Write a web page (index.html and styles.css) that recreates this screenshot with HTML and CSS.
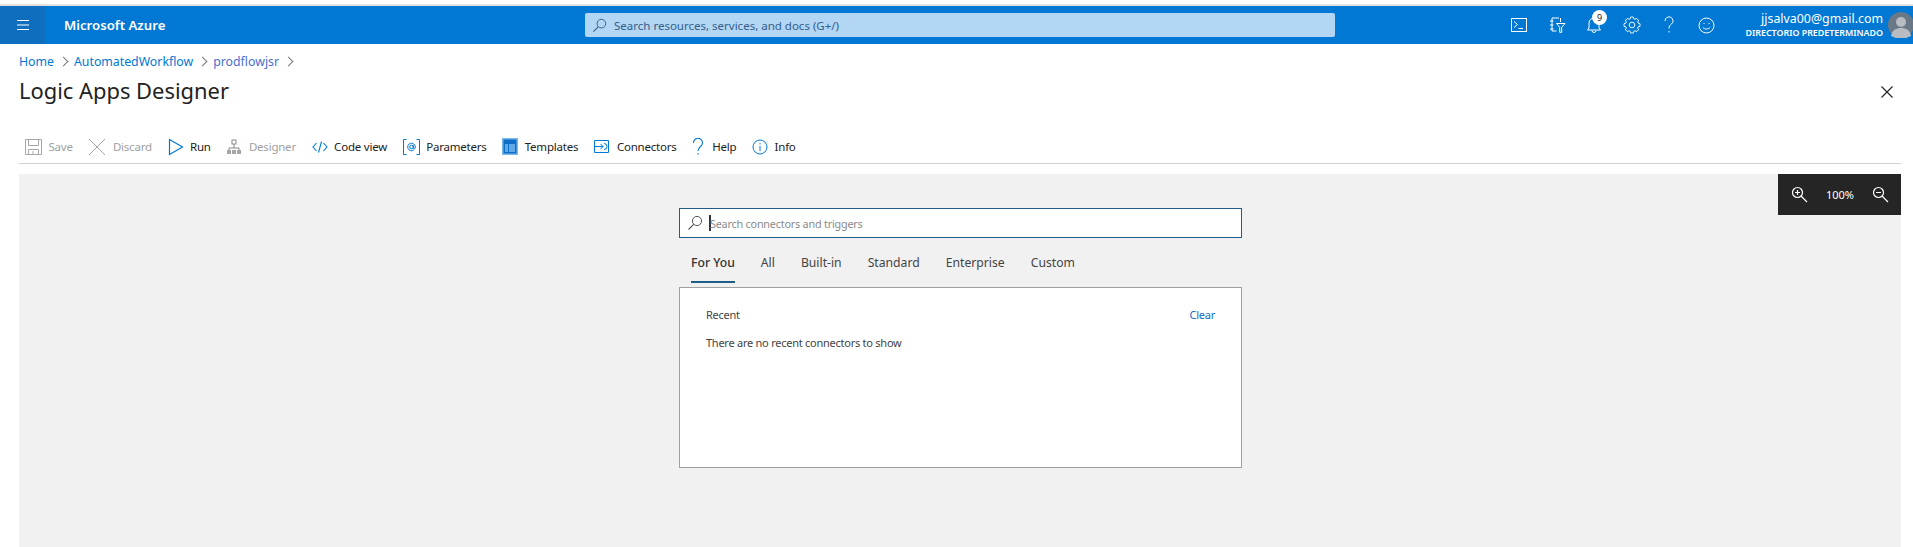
FILE: index.html
```html
<!DOCTYPE html>
<html lang="en">
<head>
  <meta charset="UTF-8">
  <title>Logic Apps Designer</title>
  <link rel="stylesheet" href="styles.css">
</head>
<body>
  <div class="franja"></div>
  <header class="barra">
    <div class="marca">
      <button class="menu">
        <svg width="16" height="16" viewBox="0 0 16 16"><path d="M2 3.500h12M2 8h12M2 12.500h12" stroke="#fff" stroke-width="1.100" fill="none"/></svg>
      </button>
      <span class="nombre">Microsoft Azure</span>
    </div>
    <div class="buscador">
      <svg width="15" height="15" viewBox="0 0 16 16"><circle cx="10" cy="6" r="4.600" fill="none" stroke="#2f5f8a" stroke-width="1"/><path d="M6.600 9.400 1.500 14.500" stroke="#2f5f8a" stroke-width="1.100"/></svg>
      <span>Search resources, services, and docs (G+/)</span>
    </div>
    <div class="acciones">
      <div class="iconos">
        <svg width="16" height="14" viewBox="0 0 16 14" fill="none" stroke="#fff"><rect x=".5" y=".5" width="15" height="13"/><path d="M3 3.500l3.500 3L3 9.500M7.500 10.500h4.500"/></svg>
        <svg width="18" height="18" viewBox="0 0 18 18" fill="none" stroke="#fff"><path d="M11 2H4v13h4.500M2 5h3.500M2 9h3.500M2 13h3.500M12.500 2v4"/><path d="M8.500 7.500h8.500l-3.300 3.800v5h-2v-5z"/></svg>
        <div class="campana">
          <svg width="16" height="18" viewBox="0 0 16 18" fill="none" stroke="#fff"><path d="M3 12V7a5 5 0 0 1 10 0v5l1.500 2h-13zM6 14.500a2 2 0 0 0 4 0"/></svg>
          <span class="globo">9</span>
        </div>
        <svg width="18" height="18" viewBox="-9 -9 18 18" fill="none" stroke="#fff" stroke-width=".9">
          <circle r="2.800"/>
          <path id="diente" d="M-2-6-1.300-8H1.300L2-6A6.320 6.320 0 0 1 2.830-5.650"/>
          <use href="#diente" transform="rotate(45)"/>
          <use href="#diente" transform="rotate(90)"/>
          <use href="#diente" transform="rotate(135)"/>
          <use href="#diente" transform="rotate(180)"/>
          <use href="#diente" transform="rotate(225)"/>
          <use href="#diente" transform="rotate(270)"/>
          <use href="#diente" transform="rotate(315)"/>
        </svg>
        <svg width="16" height="18" viewBox="0 0 16 18" fill="none" stroke="#fff"><path d="M4 5a4 4 0 1 1 6.500 3C9 9.200 8 10 8 12.500"/><path d="M8 15v1.500"/></svg>
        <svg width="17" height="17" viewBox="0 0 17 17" fill="none" stroke="#fff"><circle cx="8.500" cy="8.500" r="7.500"/><path d="M5 10.500c1.800 2 5.200 2 7 0M6 6v1M11 6v1"/></svg>
      </div>
      <div class="usuario">
        <div class="correo">jjsalva00@gmail.com</div>
        <div class="directorio">DIRECTORIO PREDETERMINADO</div>
      </div>
      <div class="avatar">
        <svg width="26" height="26" viewBox="0 0 26 26"><circle cx="13" cy="13" r="13" fill="#6b7886"/><circle cx="13" cy="10" r="5" fill="#b9bdc2"/><path d="M3 24c1-6 5-8 10-8s9 2 10 8l-5 2H8z" fill="#b9bdc2"/></svg>
      </div>
    </div>
  </header>

  <main class="pagina">
    <nav class="migas">
      <a>Home</a><i class="sep"></i><a>AutomatedWorkflow</a><i class="sep"></i><a>prodflowjsr</a><i class="sep"></i>
    </nav>
    <div class="titulo">
      <h1>Logic Apps Designer</h1>
      <svg class="cerrar" width="14" height="14" viewBox="0 0 14 14"><path d="M1.500 1.500l11 11M12.500 1.500l-11 11" stroke="#222" stroke-width="1.100"/></svg>
    </div>

    <div class="herramientas">
      <div class="boton apagado">
        <svg width="17" height="18" viewBox="0 0 17 18" fill="none" stroke="#a6a6a6"><path d="M.5 1.500h16v15H.5zM3.500 1.500v6h10v-6M3.500 16.500v-5h10v5M8 13v3.500"/></svg>
        <span>Save</span>
      </div>
      <div class="boton apagado">
        <svg width="18" height="18" viewBox="0 0 18 18" fill="none" stroke="#a6a6a6"><path d="M1 1l16 16M17 1L1 17"/></svg>
        <span>Discard</span>
      </div>
      <div class="boton">
        <svg width="16" height="18" viewBox="0 0 16 18" fill="none" stroke="#0078d4" stroke-width="1.200"><path d="M1.500 1.500v15L14.500 9z"/></svg>
        <span>Run</span>
      </div>
      <div class="boton apagado">
        <svg width="16" height="18" viewBox="0 0 16 18" fill="none"><rect x="6" y="2" width="4" height="4" stroke="#8a8a8a"/><path d="M8 6v4M3 12v-2h10v2" stroke="#8a8a8a"/><rect x="1" y="12" width="4" height="4" fill="#a6a6a6"/><rect x="6" y="12" width="4" height="4" fill="#a6a6a6"/><rect x="11" y="12" width="4" height="4" fill="#a6a6a6"/></svg>
        <span>Designer</span>
      </div>
      <div class="boton">
        <svg width="16" height="16" viewBox="0 0 16 16" fill="none" stroke="#0078d4" stroke-width="1.100"><path d="M4.500 4L1 8l3.500 4M11.500 4L15 8l-3.500 4M9.500 2.500l-3 11"/></svg>
        <span>Code view</span>
      </div>
      <div class="boton">
        <svg width="17" height="18" viewBox="0 0 17 18" fill="none" stroke="#0078d4"><path d="M3.500 1.500h-3v15h3M13.500 1.500h3v15h-3"/><circle cx="8.500" cy="9" r="1.800"/><path d="M10.300 7.200v3c0 1.300 2 1.300 2-1.200a3.800 3.800 0 1 0-1.500 3"/></svg>
        <span>Parameters</span>
      </div>
      <div class="boton">
        <svg width="16" height="17" viewBox="0 0 16 17"><rect width="16" height="17" fill="#7ab8ec"/><rect x="1.500" y="1.500" width="13" height="14" fill="#0f6fc6"/><rect x="3" y="6" width="3" height="8" fill="#5ea9e6"/><rect x="7" y="6" width="6" height="8" fill="#5ea9e6"/></svg>
        <span>Templates</span>
      </div>
      <div class="boton conector">
        <svg width="15" height="13" viewBox="0 0 15 13" fill="none" stroke="#0078d4"><path d="M.5.500h14v12H.5zM1 6.500h8M6.500 4L9 6.500 6.500 9M10 3.500a3 3 0 0 1 0 6"/></svg>
        <span>Connectors</span>
      </div>
      <div class="boton conector">
        <svg width="12" height="18" viewBox="0 0 12 18" fill="none" stroke="#0078d4" stroke-width="1.100"><path d="M1.500 5a4.500 4.500 0 1 1 7 3.500C7 9.700 6 10.500 6 13"/><path d="M6 15v1.500"/></svg>
        <span>Help</span>
      </div>
      <div class="boton">
        <svg width="16" height="16" viewBox="0 0 16 16" fill="none" stroke="#0078d4"><circle cx="8" cy="8" r="7"/><path d="M8 7v5M8 4v1.500"/></svg>
        <span>Info</span>
      </div>
    </div>

    <section class="lienzo">
      <div class="zoom">
        <svg width="17" height="17" viewBox="0 0 17 17" fill="none" stroke="#fff" stroke-width="1.200"><circle cx="6.500" cy="6.500" r="5"/><path d="M10 10l6 6M4 6.500h5M6.500 4v5"/></svg>
        <span>100%</span>
        <svg width="17" height="17" viewBox="0 0 17 17" fill="none" stroke="#fff" stroke-width="1.200"><circle cx="6.500" cy="6.500" r="5"/><path d="M10 10l6 6M4 6.500h5"/></svg>
      </div>

      <div class="selector">
        <div class="caja">
          <svg width="16" height="16" viewBox="0 0 16 16"><circle cx="10" cy="6" r="4.600" fill="none" stroke="#555" stroke-width="1"/><path d="M6.600 9.400 1.500 14.500" stroke="#555" stroke-width="1.100"/></svg>
          <i class="cursor"></i>
          <span>Search connectors and triggers</span>
        </div>
        <div class="pestanas">
          <span class="activa">For You</span>
          <span>All</span>
          <span>Built-in</span>
          <span>Standard</span>
          <span>Enterprise</span>
          <span>Custom</span>
        </div>
        <div class="panel">
          <div class="fila">
            <span>Recent</span>
            <a>Clear</a>
          </div>
          <p>There are no recent connectors to show</p>
        </div>
      </div>
    </section>
  </main>
</body>
</html>
```

FILE: styles.css
```css
* {
  box-sizing: border-box;
}

html, body {
  height: 100%;
}

body {
  margin: 0;
  overflow: hidden;
  font-family: "Noto Sans", "Open Sans", sans-serif;
  background-color: white;
  color: #222;
  display: flex;
  flex-direction: column;
}

svg {
  display: block;
  flex: none;
}

.franja {
  height: 6px;
  flex: none;
  border-top: 4px solid white;
  background-color: #e1e1e1;
}

.barra {
  height: 38px;
  flex: none;
  display: flex;
  align-items: center;
  background-color: #0078d4;
  color: white;
}

.marca {
  width: 585px;
  height: 100%;
  flex: none;
  display: flex;
  align-items: center;
}

.menu {
  width: 45px;
  height: 100%;
  padding: 0;
  border: none;
  background-color: #106ebe;
  display: flex;
  align-items: center;
  justify-content: center;
}

.nombre {
  margin-left: 19px;
  font-size: 13.200px;
  font-weight: 600;
}

.buscador {
  width: 750px;
  height: 24px;
  flex: none;
  display: flex;
  align-items: center;
  gap: 7px;
  padding-left: 7px;
  border-radius: 2px;
  background-color: #b2d6f3;
  color: #33608c;
  font-size: 11.500px;
}

.acciones {
  flex: 1;
  height: 100%;
  display: flex;
  align-items: center;
}

.iconos {
  display: flex;
  margin-left: 176px;
  align-items: center;
  gap: 20.500px;
}

.campana {
  position: relative;
}

.globo {
  position: absolute;
  top: -6px;
  left: 6px;
  width: 15px;
  height: 15px;
  border-radius: 50%;
  background-color: white;
  color: #222;
  font-size: 9px;
  line-height: 15px;
  text-align: center;
}

.usuario {
  margin-left: auto;
  text-align: right;
  white-space: nowrap;
}

.correo {
  font-size: 12.400px;
  line-height: 16px;
}

.directorio {
  font-size: 8.900px;
  font-weight: 600;
  line-height: 12px;
}

.avatar {
  width: 25px;
  flex: none;
  margin-left: 5px;
}

.pagina {
  flex: 1;
  min-height: 0;
  padding: 0 12px 0 19px;
  display: flex;
  flex-direction: column;
}

.migas {
  height: 34px;
  display: flex;
  align-items: center;
  gap: 7.500px;
  font-size: 12.300px;
  color: #0078d4;
}

.migas a:last-of-type {
  color: #4a6fd0;
}

.sep {
  width: 7px;
  height: 7px;
  margin-left: -2px;
  border-top: 1px solid #777;
  border-right: 1px solid #777;
  transform: rotate(45deg);
}

.titulo {
  height: 24px;
  margin-bottom: 4px;
  display: flex;
  align-items: center;
  justify-content: space-between;
  padding-right: 7px;
}

h1 {
  margin: 0;
  font-size: 21.900px;
  font-weight: 400;
}

.cerrar {
  margin-top: 4px;
}

.herramientas {
  height: 58px;
  padding: 24px 0 0 6px;
  display: flex;
  align-items: center;
  gap: 15.700px;
  border-bottom: 1px solid #d2d2d2;
  font-size: 11.500px;
  letter-spacing: -0.220px;
}

.boton {
  display: flex;
  align-items: center;
  gap: 6.500px;
}

.conector {
  gap: 8px;
}

.apagado {
  color: #a0a0a0;
}

.lienzo {
  flex: 1;
  margin-top: 10px;
  position: relative;
  background-color: #f1f1f1;
}

.zoom {
  position: absolute;
  top: 0;
  right: 0;
  width: 123px;
  height: 41px;
  padding: 0 12px 0 13px;
  display: flex;
  align-items: center;
  justify-content: space-between;
  background-color: #252525;
  color: white;
  font-size: 11px;
}

.selector {
  width: 563px;
  margin-left: 660px;
  padding-top: 34px;
}

.caja {
  height: 30px;
  display: flex;
  align-items: center;
  padding-left: 7px;
  border: 1px solid #1e5f8a;
  background-color: white;
  color: #8a8a8a;
  font-size: 10.800px;
  letter-spacing: -0.200px;
}

.cursor {
  width: 2px;
  height: 16px;
  margin: 0 -1px 0 6px;
  background-color: #333;
}

.pestanas {
  height: 45px;
  margin-bottom: 4px;
  display: flex;
  align-items: stretch;
  gap: 26px;
  padding-left: 12px;
  font-size: 12.200px;
  color: #444;
}

.pestanas span {
  padding-top: 16px;
}

.pestanas .activa {
  color: #333;
  font-weight: 500;
  border-bottom: 2px solid #1e5f8a;
}

.panel {
  height: 181px;
  padding: 19px 26px;
  border: 1px solid #a0a0a0;
  background-color: white;
  font-size: 11px;
  letter-spacing: -0.250px;
  color: #444;
}

.fila {
  display: flex;
  justify-content: space-between;
}

.fila a {
  color: #0d6cbf;
}

.panel p {
  margin: 13px 0 0;
}
```
